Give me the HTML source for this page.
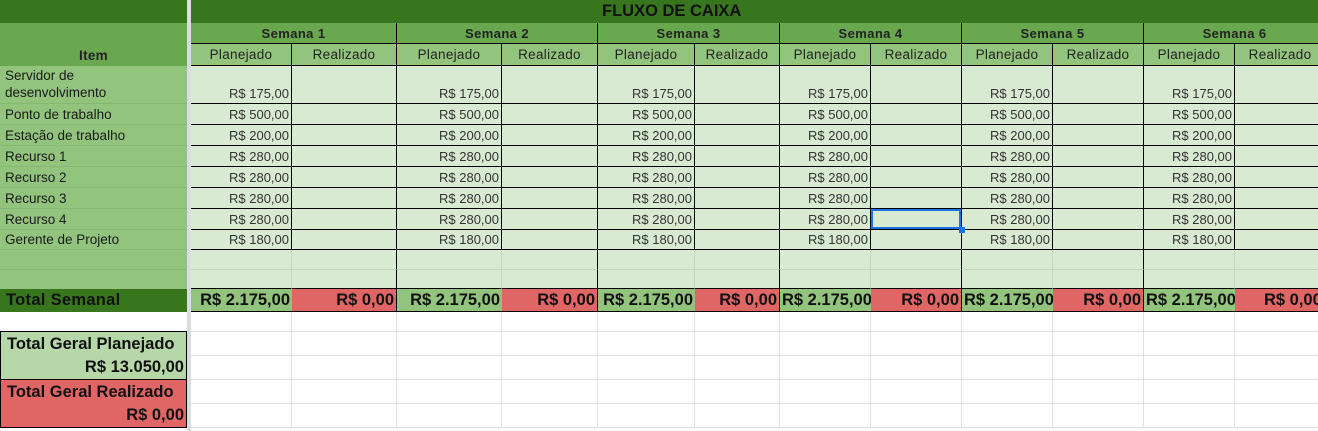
<!DOCTYPE html>
<html><head><meta charset="utf-8"><style>
html,body{margin:0;padding:0;width:1318px;height:431px;overflow:hidden;background:#fff;font-family:"Liberation Sans",Arial,sans-serif;}
table{border-collapse:separate;border-spacing:0;table-layout:fixed;position:absolute;top:0;}
td{padding:0 3px;font-size:13.5px;white-space:nowrap;overflow:hidden;box-sizing:border-box;vertical-align:bottom;color:#222;}
#L{left:0;width:187px;}
#R{left:191px;width:1135px;}
#div{position:absolute;left:187px;top:0;width:4px;height:431px;background:#dadce0;}
.t{background:#38761d;}
.s{background:#6aa84f;font-weight:bold;text-align:center;border-right:1px solid #000;border-bottom:1px solid #000;vertical-align:middle;letter-spacing:0.4px;font-size:13px;}
.h{background:#93c47d;text-align:center;border-bottom:1px solid #000;vertical-align:middle;letter-spacing:0.3px;}
.hp{border-right:1px solid #000;}
.hr{border-right:1px solid #000;}
.p{background:#d9ead3;text-align:right;color:#333;border-right:1px solid #000;border-bottom:1px solid #000;padding:0 2px 2px 3px;font-size:13px;}
.r{background:#d9ead3;border-right:1px solid #000;border-bottom:1px solid #000;}
.e1p{background:#d9ead3;border-right:1px solid #c5d6bf;border-bottom:1px solid #c5d6bf;}
.e1r{background:#d9ead3;border-right:1px solid #000;border-bottom:1px solid #c5d6bf;}
.e2p{background:#d9ead3;border-right:1px solid #c5d6bf;border-bottom:1px solid #000;}
.e2r{background:#d9ead3;border-right:1px solid #000;border-bottom:1px solid #000;}
.tp{background:#93c47d;font-size:16.5px;font-weight:bold;color:#111;text-align:right;border-bottom:1px solid #000;vertical-align:middle;padding:0 2px 0 4px;}
.tpl{text-align:left;padding-left:2px;}
.tr{background:#e06666;font-size:16.5px;font-weight:bold;color:#111;text-align:right;border-right:1px solid #000;border-bottom:1px solid #000;vertical-align:middle;padding:0 2px;}
.w{border-right:1px solid #e2e2e2;border-bottom:1px solid #e2e2e2;}
.li{background:#93c47d;border-bottom:1px solid #86b970;padding:0 3px 2px 5px;font-size:13.5px;color:#1a1a1a;}
.big{font-size:16.5px;color:#111;vertical-align:middle;}
</style></head><body>
<table id="L">
<col style="width:187px">
<tr style="height:23px"><td class="t"></td></tr>
<tr style="height:43px"><td style="background:#6aa84f;text-align:center;font-weight:bold;padding-bottom:3px;letter-spacing:0.3px">Item</td></tr>
<tr style="height:38px"><td class="li" style="line-height:17px">Servidor de<br>desenvolvimento</td></tr>
<tr style="height:21px"><td class="li">Ponto de trabalho</td></tr>
<tr style="height:21px"><td class="li">Estação de trabalho</td></tr>
<tr style="height:21px"><td class="li">Recurso 1</td></tr>
<tr style="height:21px"><td class="li">Recurso 2</td></tr>
<tr style="height:21px"><td class="li">Recurso 3</td></tr>
<tr style="height:21px"><td class="li">Recurso 4</td></tr>
<tr style="height:20px"><td class="li">Gerente de Projeto</td></tr>
<tr style="height:20px"><td class="li"></td></tr>
<tr style="height:19px"><td class="li" style="border-bottom:none"></td></tr>
<tr style="height:23px"><td class="t big" style="font-weight:bold;padding-left:6px;letter-spacing:0.3px">Total Semanal</td></tr>
<tr style="height:20px"><td style="border-bottom:1px solid #000"></td></tr>
<tr style="height:24px"><td class="big" style="background:#b6d7a8;font-weight:bold;padding-left:6px;border-left:1px solid #000;border-right:1px solid #000">Total Geral Planejado</td></tr>
<tr style="height:24px"><td class="big" style="background:#b6d7a8;font-weight:bold;text-align:right;padding-right:2px;border-left:1px solid #000;border-right:1px solid #000;border-bottom:1px solid #000">R$ 13.050,00</td></tr>
<tr style="height:24px"><td class="big" style="background:#e06666;font-weight:bold;padding-left:6px;border-left:1px solid #000;border-right:1px solid #000">Total Geral Realizado</td></tr>
<tr style="height:24px"><td class="big" style="background:#e06666;font-weight:bold;text-align:right;padding-right:2px;border-left:1px solid #000;border-right:1px solid #000;border-bottom:1px solid #000">R$ 0,00</td></tr>
</table>
<div id="div"></div>
<table id="R">
<col style="width:101px"><col style="width:105px"><col style="width:105px"><col style="width:96px"><col style="width:97px"><col style="width:85px"><col style="width:91px"><col style="width:91px"><col style="width:91px"><col style="width:91px"><col style="width:91px"><col style="width:91px">
<tr style="height:23px"><td class="t" colspan="12" style="vertical-align:middle;padding-left:411px;font-size:16.5px;font-weight:bold;color:#111">FLUXO DE CAIXA</td></tr>
<tr style="height:21px"><td class="s" colspan="2">Semana 1</td><td class="s" colspan="2">Semana 2</td><td class="s" colspan="2">Semana 3</td><td class="s" colspan="2">Semana 4</td><td class="s" colspan="2">Semana 5</td><td class="s" colspan="2">Semana 6</td></tr>
<tr style="height:22px"><td class="h hp">Planejado</td><td class="h hr">Realizado</td><td class="h hp">Planejado</td><td class="h hr">Realizado</td><td class="h hp">Planejado</td><td class="h hr">Realizado</td><td class="h hp">Planejado</td><td class="h hr">Realizado</td><td class="h hp">Planejado</td><td class="h hr">Realizado</td><td class="h hp">Planejado</td><td class="h hr">Realizado</td></tr>
<tr style="height:38px"><td class="p">R$ 175,00</td><td class="r"></td><td class="p">R$ 175,00</td><td class="r"></td><td class="p">R$ 175,00</td><td class="r"></td><td class="p">R$ 175,00</td><td class="r"></td><td class="p">R$ 175,00</td><td class="r"></td><td class="p">R$ 175,00</td><td class="r"></td></tr>
<tr style="height:21px"><td class="p">R$ 500,00</td><td class="r"></td><td class="p">R$ 500,00</td><td class="r"></td><td class="p">R$ 500,00</td><td class="r"></td><td class="p">R$ 500,00</td><td class="r"></td><td class="p">R$ 500,00</td><td class="r"></td><td class="p">R$ 500,00</td><td class="r"></td></tr>
<tr style="height:21px"><td class="p">R$ 200,00</td><td class="r"></td><td class="p">R$ 200,00</td><td class="r"></td><td class="p">R$ 200,00</td><td class="r"></td><td class="p">R$ 200,00</td><td class="r"></td><td class="p">R$ 200,00</td><td class="r"></td><td class="p">R$ 200,00</td><td class="r"></td></tr>
<tr style="height:21px"><td class="p">R$ 280,00</td><td class="r"></td><td class="p">R$ 280,00</td><td class="r"></td><td class="p">R$ 280,00</td><td class="r"></td><td class="p">R$ 280,00</td><td class="r"></td><td class="p">R$ 280,00</td><td class="r"></td><td class="p">R$ 280,00</td><td class="r"></td></tr>
<tr style="height:21px"><td class="p">R$ 280,00</td><td class="r"></td><td class="p">R$ 280,00</td><td class="r"></td><td class="p">R$ 280,00</td><td class="r"></td><td class="p">R$ 280,00</td><td class="r"></td><td class="p">R$ 280,00</td><td class="r"></td><td class="p">R$ 280,00</td><td class="r"></td></tr>
<tr style="height:21px"><td class="p">R$ 280,00</td><td class="r"></td><td class="p">R$ 280,00</td><td class="r"></td><td class="p">R$ 280,00</td><td class="r"></td><td class="p">R$ 280,00</td><td class="r"></td><td class="p">R$ 280,00</td><td class="r"></td><td class="p">R$ 280,00</td><td class="r"></td></tr>
<tr style="height:21px"><td class="p">R$ 280,00</td><td class="r"></td><td class="p">R$ 280,00</td><td class="r"></td><td class="p">R$ 280,00</td><td class="r"></td><td class="p">R$ 280,00</td><td class="r" style="box-shadow:inset 0 0 0 2px #1a73e8;position:relative;overflow:visible"><div style="position:absolute;right:-4px;bottom:-4px;width:6px;height:6px;background:#1a73e8"></div></td><td class="p">R$ 280,00</td><td class="r"></td><td class="p">R$ 280,00</td><td class="r"></td></tr>
<tr style="height:20px"><td class="p">R$ 180,00</td><td class="r"></td><td class="p">R$ 180,00</td><td class="r"></td><td class="p">R$ 180,00</td><td class="r"></td><td class="p">R$ 180,00</td><td class="r"></td><td class="p">R$ 180,00</td><td class="r"></td><td class="p">R$ 180,00</td><td class="r"></td></tr>
<tr style="height:20px"><td class="e1p"></td><td class="e1r"></td><td class="e1p"></td><td class="e1r"></td><td class="e1p"></td><td class="e1r"></td><td class="e1p"></td><td class="e1r"></td><td class="e1p"></td><td class="e1r"></td><td class="e1p"></td><td class="e1r"></td></tr>
<tr style="height:19px"><td class="e2p"></td><td class="e2r"></td><td class="e2p"></td><td class="e2r"></td><td class="e2p"></td><td class="e2r"></td><td class="e2p"></td><td class="e2r"></td><td class="e2p"></td><td class="e2r"></td><td class="e2p"></td><td class="e2r"></td></tr>
<tr style="height:23px"><td class="tp">R$ 2.175,00</td><td class="tr">R$ 0,00</td><td class="tp">R$ 2.175,00</td><td class="tr">R$ 0,00</td><td class="tp">R$ 2.175,00</td><td class="tr">R$ 0,00</td><td class="tp tpl">R$ 2.175,00</td><td class="tr">R$ 0,00</td><td class="tp tpl">R$ 2.175,00</td><td class="tr">R$ 0,00</td><td class="tp tpl">R$ 2.175,00</td><td class="tr" style="text-align:left;padding-left:29px">R$ 0,00</td></tr>
<tr style="height:20px"><td class="w"></td><td class="w"></td><td class="w"></td><td class="w"></td><td class="w"></td><td class="w"></td><td class="w"></td><td class="w"></td><td class="w"></td><td class="w"></td><td class="w"></td><td class="w"></td></tr>
<tr style="height:24px"><td class="w"></td><td class="w"></td><td class="w"></td><td class="w"></td><td class="w"></td><td class="w"></td><td class="w"></td><td class="w"></td><td class="w"></td><td class="w"></td><td class="w"></td><td class="w"></td></tr>
<tr style="height:24px"><td class="w"></td><td class="w"></td><td class="w"></td><td class="w"></td><td class="w"></td><td class="w"></td><td class="w"></td><td class="w"></td><td class="w"></td><td class="w"></td><td class="w"></td><td class="w"></td></tr>
<tr style="height:24px"><td class="w"></td><td class="w"></td><td class="w"></td><td class="w"></td><td class="w"></td><td class="w"></td><td class="w"></td><td class="w"></td><td class="w"></td><td class="w"></td><td class="w"></td><td class="w"></td></tr>
<tr style="height:24px"><td class="w"></td><td class="w"></td><td class="w"></td><td class="w"></td><td class="w"></td><td class="w"></td><td class="w"></td><td class="w"></td><td class="w"></td><td class="w"></td><td class="w"></td><td class="w"></td></tr>
</table>
</body></html>
